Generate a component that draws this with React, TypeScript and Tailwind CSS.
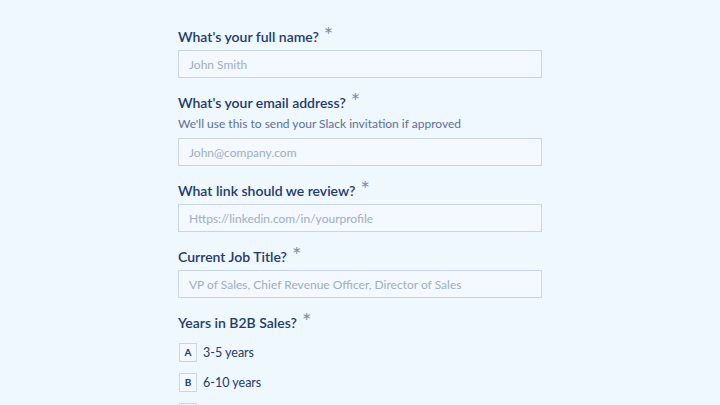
import { useState } from "react";

const font = { fontFamily: 'Lato, "Open Sans", sans-serif' };

function Label({ text }: { text: string }) {
  return (
    <label className="flex items-start h-5 text-[14px] font-semibold text-[#203b6c] leading-5">
      {text}
      <span className="ml-[5px] -mt-[1px] text-[22px] leading-[18px] font-normal text-[#7990b3]">*</span>
    </label>
  );
}

function TextInput({ placeholder }: { placeholder: string }) {
  const [value, setValue] = useState("");
  return (
    <input
      value={value}
      onChange={(e) => setValue(e.target.value)}
      placeholder={placeholder}
      className="w-[364px] h-[28px] px-[10px] text-[12px] bg-[#f3f9ff] border border-[#c9d5e3] text-[#203b6c] placeholder:text-[#9eadc2] outline-none"
    />
  );
}

export default function App() {
  const [years, setYears] = useState<string | null>(null);
  const options = [
    { key: "A", label: "3-5 years" },
    { key: "B", label: "6-10 years" },
    { key: "C", label: "10+ years" },
  ];

  return (
    <div className="w-[720px] h-[405px] overflow-hidden bg-[#eff7ff]" style={font}>
      <form className="ml-[178px] pt-[27px] w-[364px]">
        {/* name */}
        <div className="mb-[15px]">
          <Label text="What's your full name?" />
          <div className="mt-[3px]">
            <TextInput placeholder="John Smith" />
          </div>
        </div>

        {/* email */}
        <div className="mb-[15px]">
          <Label text="What's your email address?" />
          <p className="mt-[1px] h-[20px] text-[12px] leading-5 text-[#5b7196]">
            We'll use this to send your Slack invitation if approved
          </p>
          <div className="mt-[4px]">
            <TextInput placeholder="John@company.com" />
          </div>
        </div>

        {/* link */}
        <div className="mb-[15px]">
          <Label text="What link should we review?" />
          <div className="mt-[3px]">
            <TextInput placeholder="Https://linkedin.com/in/yourprofile" />
          </div>
        </div>

        {/* job title */}
        <div className="mb-[15px]">
          <Label text="Current Job Title?" />
          <div className="mt-[3px]">
            <TextInput placeholder="VP of Sales, Chief Revenue Officer, Director of Sales" />
          </div>
        </div>

        {/* years */}
        <div>
          <Label text="Years in B2B Sales?" />
          <div className="mt-[10px] flex flex-col gap-[11px]">
            {options.map((o) => (
              <button
                key={o.key}
                type="button"
                onClick={() => setYears(o.key)}
                className="flex items-center h-[19px] gap-[6px] ml-px text-left"
              >
                <span
                  className={`w-[18px] h-[19px] flex items-center justify-center border text-[10px] font-bold ${
                    years === o.key
                      ? "bg-[#203b6c] text-white border-[#203b6c]"
                      : "bg-[#f3f9ff] border-[#c9d5e3] text-[#203b6c]"
                  }`}
                >
                  {o.key}
                </span>
                <span className="text-[12.5px] leading-[19px] text-[#203b6c]">{o.label}</span>
              </button>
            ))}
          </div>
        </div>
      </form>
    </div>
  );
}
